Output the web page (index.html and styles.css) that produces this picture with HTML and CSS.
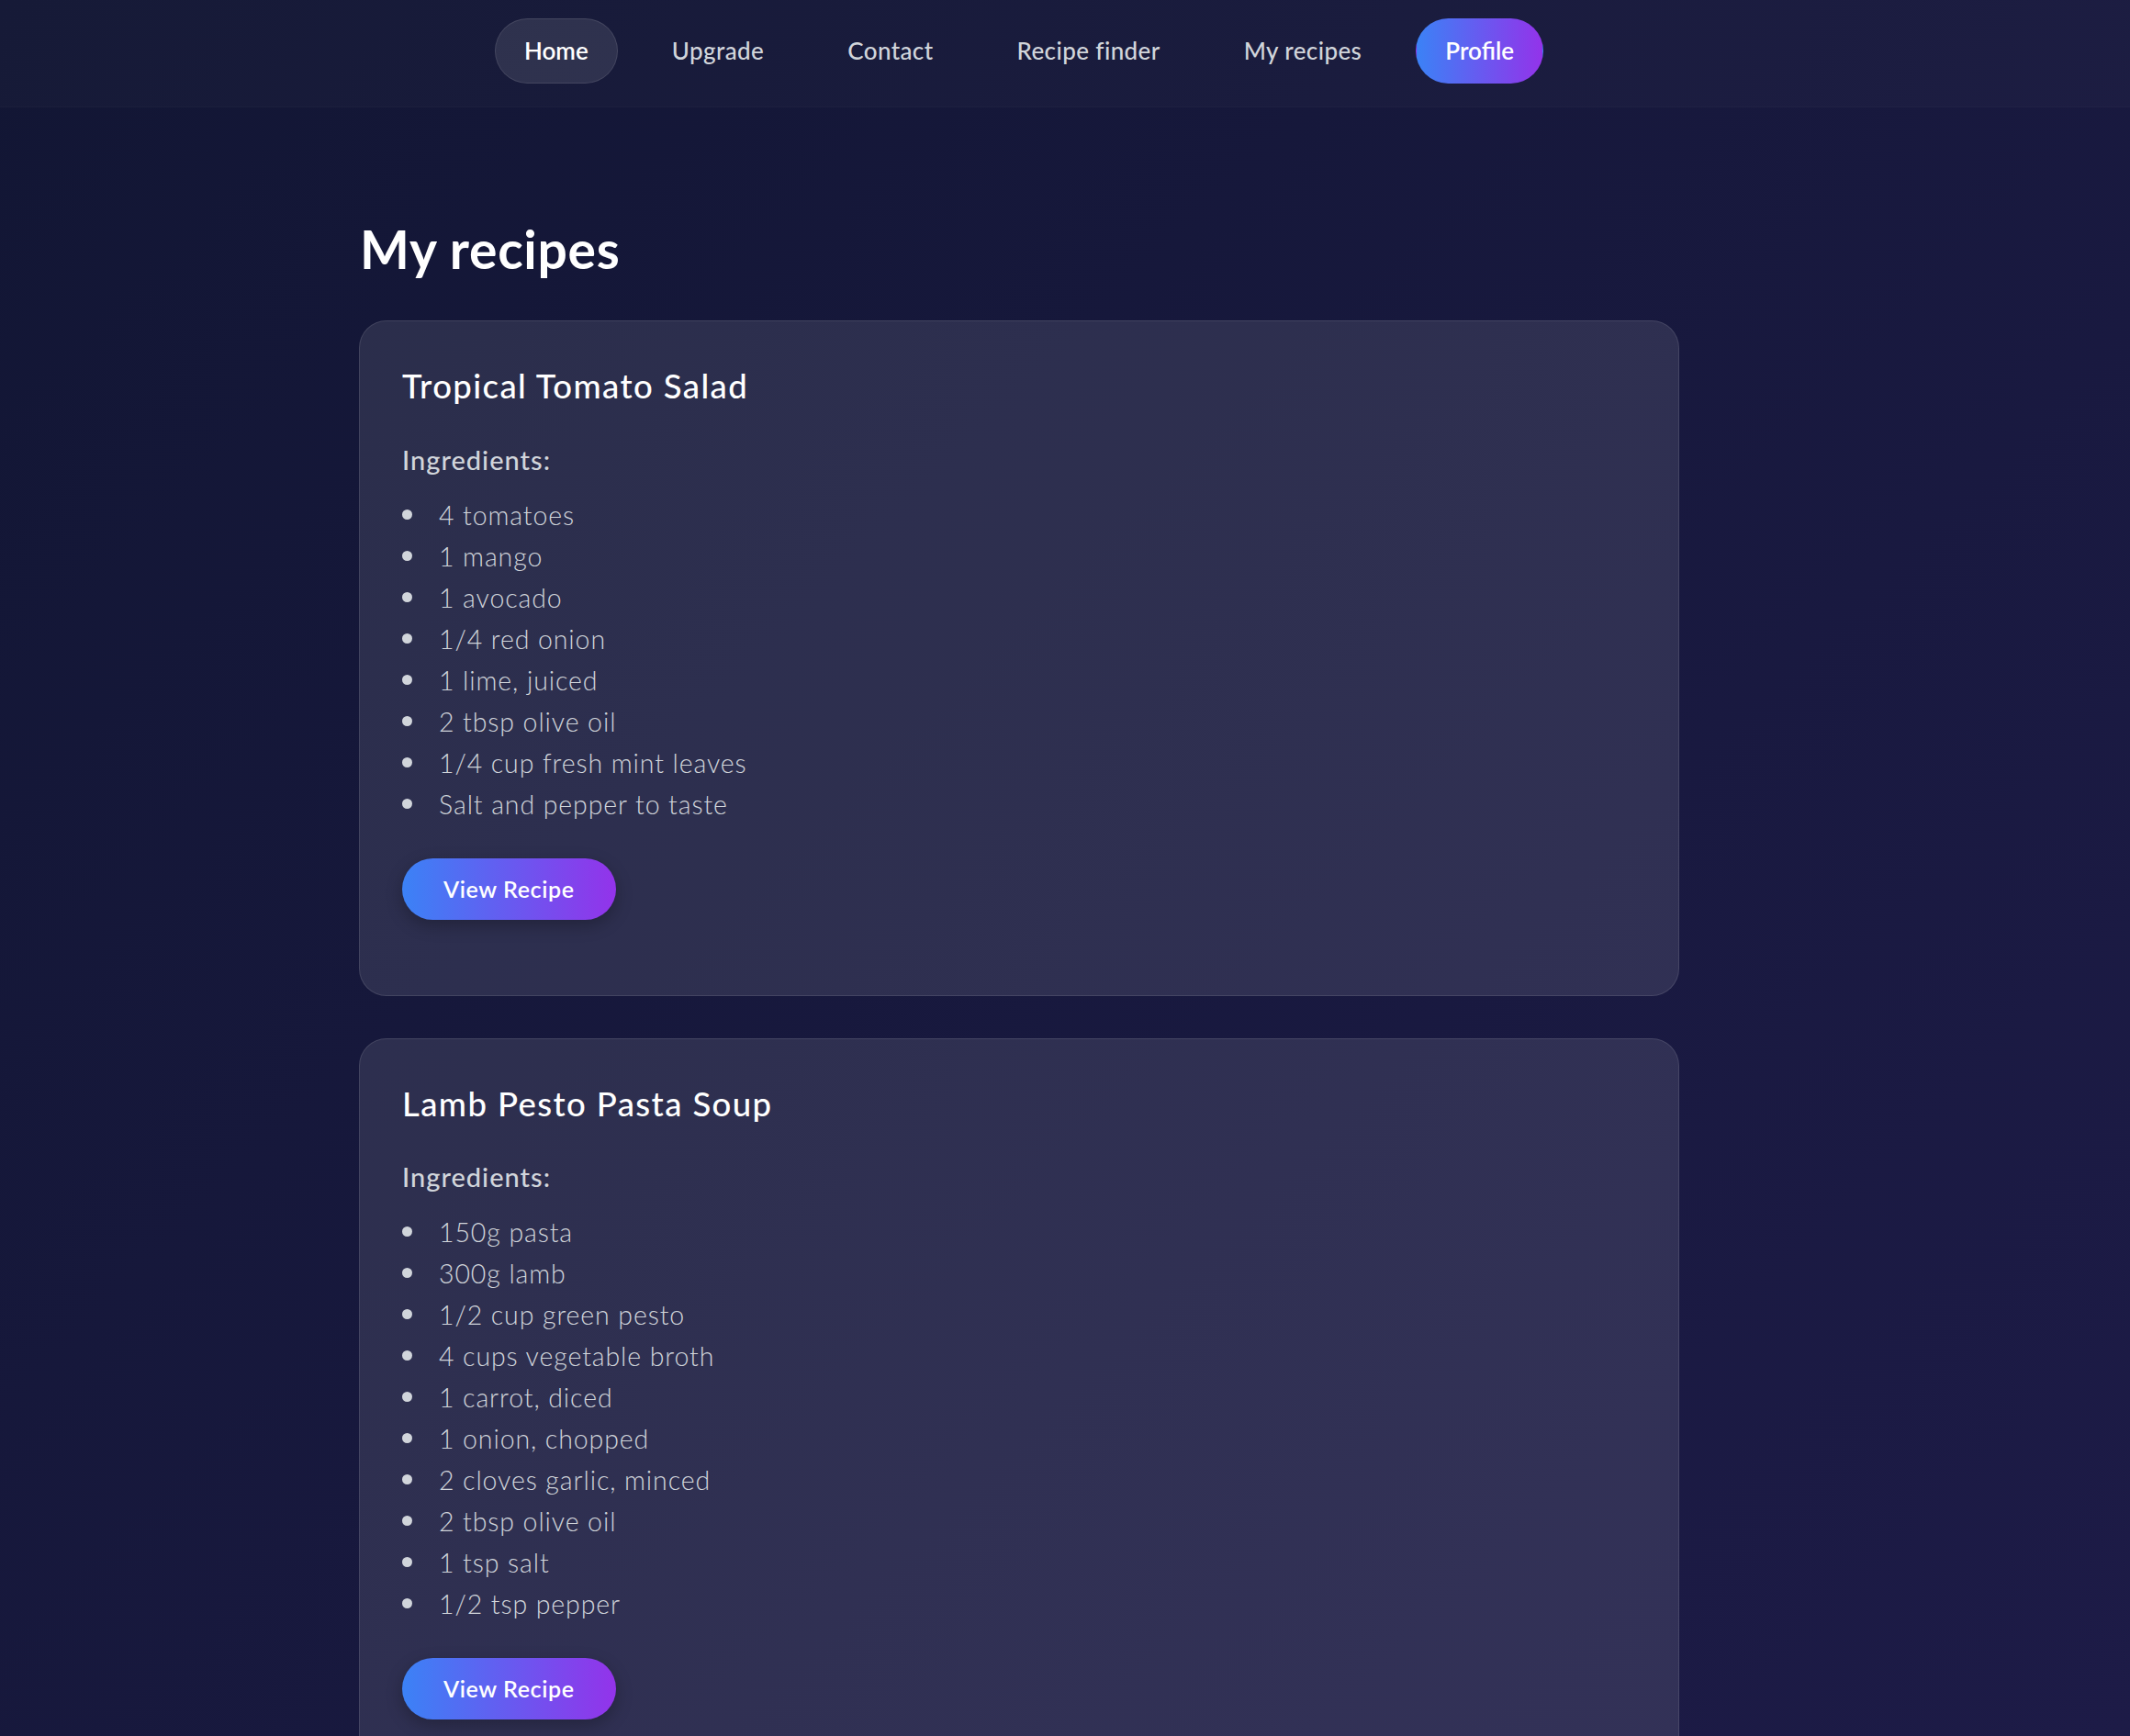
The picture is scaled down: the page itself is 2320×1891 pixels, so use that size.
FILE: index.html
```html
<!DOCTYPE html>
<html lang="en">
<head>
  <meta charset="UTF-8">
  <title>My recipes</title>
  <link rel="stylesheet" href="styles.css">
</head>
<body>

  <nav class="topbar">
    <ul class="nav-links">
      <li><a href="#" class="nav-link active">Home</a></li>
      <li><a href="#" class="nav-link">Upgrade</a></li>
      <li><a href="#" class="nav-link">Contact</a></li>
      <li><a href="#" class="nav-link">Recipe finder</a></li>
      <li><a href="#" class="nav-link">My recipes</a></li>
      <li><a href="#" class="nav-link profile">Profile</a></li>
    </ul>
  </nav>

  <main class="page">
    <h1>My recipes</h1>

    <div class="recipe-card">
      <h2>Tropical Tomato Salad</h2>
      <h3>Ingredients:</h3>
      <ul class="ingredients">
        <li>4 tomatoes</li>
        <li>1 mango</li>
        <li>1 avocado</li>
        <li>1/4 red onion</li>
        <li>1 lime, juiced</li>
        <li>2 tbsp olive oil</li>
        <li>1/4 cup fresh mint leaves</li>
        <li>Salt and pepper to taste</li>
      </ul>
      <button class="btn-view">View Recipe</button>
    </div>

    <div class="recipe-card">
      <h2>Lamb Pesto Pasta Soup</h2>
      <h3>Ingredients:</h3>
      <ul class="ingredients">
        <li>150g pasta</li>
        <li>300g lamb</li>
        <li>1/2 cup green pesto</li>
        <li>4 cups vegetable broth</li>
        <li>1 carrot, diced</li>
        <li>1 onion, chopped</li>
        <li>2 cloves garlic, minced</li>
        <li>2 tbsp olive oil</li>
        <li>1 tsp salt</li>
        <li>1/2 tsp pepper</li>
      </ul>
      <button class="btn-view">View Recipe</button>
    </div>
  </main>

</body>
</html>
```

FILE: styles.css
```css
body {
  margin: 0;
  font-family: Lato, "Open Sans", sans-serif;
  color: #fff;
  background: linear-gradient(135deg, #121634 0%, #1d1b47 100%) fixed;
  min-height: 100vh;
}

.topbar {
  background: rgba(255, 255, 255, 0.018);
  border-bottom: 1px solid rgba(255, 255, 255, 0.02);
  padding: 20px 100px 25px 0;
}

.nav-links {
  list-style: none;
  margin: 0;
  padding: 0;
  display: flex;
  justify-content: center;
  gap: 27px;
}

.nav-link {
  display: block;
  padding: 15px 31px;
  line-height: 39px;
  font-size: 26px;
  font-weight: 500;
  letter-spacing: 0.4px;
  color: #d1d5db;
  text-decoration: none;
  border: 1px solid transparent;
  border-radius: 999px;
}

.nav-link.active {
  color: #fff;
  font-weight: 600;
  letter-spacing: 0;
  background: rgba(255, 255, 255, 0.1);
  border-color: rgba(255, 255, 255, 0.1);
}

.nav-link.profile {
  color: #fff;
  font-weight: 600;
  letter-spacing: 0;
  background: linear-gradient(90deg, #3b82f6, #9333ea);
}

.page {
  max-width: 1438px;
  margin: 0 auto;
  padding: 120px 100px 40px 0;
}

h1 {
  margin: 0 0 44px;
  font-size: 57px;
  line-height: 1.2;
  font-weight: 700;
  letter-spacing: 0.7px;
  padding-left: 1px;
}

.recipe-card {
  background: rgba(255, 255, 255, 0.1);
  border: 1px solid rgba(255, 255, 255, 0.1);
  border-radius: 30px;
  padding: 47px 46px;
  margin-bottom: 46px;
}

.recipe-card h2 {
  margin: 0 0 38px;
  font-size: 36.5px;
  line-height: 1.27;
  font-weight: 500;
  letter-spacing: 1.4px;
}

.recipe-card h3 {
  margin: 0 0 20px;
  font-size: 29px;
  line-height: 1.28;
  font-weight: 500;
  letter-spacing: 1px;
  color: #d1d5db;
}

.ingredients {
  list-style: none;
  margin: 0;
  padding: 0;
}

.ingredients li {
  display: flex;
  align-items: center;
  gap: 29px;
  font-size: 28.5px;
  line-height: 45px;
  font-weight: 300;
  letter-spacing: 0.9px;
  color: #d1d5db;
}

.ingredients li::before {
  content: "";
  width: 11px;
  height: 11px;
  border-radius: 50%;
  background: #d1d5db;
  margin-top: -2px;
}

.btn-view {
  margin: 36px 0 35px;
  padding: 18px 45px;
  font-family: inherit;
  font-size: 25px;
  line-height: 31px;
  font-weight: 600;
  letter-spacing: 0.6px;
  color: #fff;
  border: none;
  border-radius: 999px;
  background: linear-gradient(90deg, #3b82f6, #9333ea);
  box-shadow: 0 6px 18px rgba(0, 0, 0, 0.25);
  cursor: pointer;
}
```
